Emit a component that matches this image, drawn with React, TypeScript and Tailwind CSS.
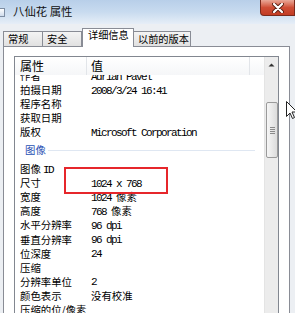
import React from "react";

type Row = { label: string; labelMono?: string; value?: string; valueCjk?: string };

const topRows: Row[] = [
  { label: "作者", value: "Adrian Pavel" },
  { label: "拍摄日期", value: "2008/3/24 16:41" },
  { label: "程序名称" },
  { label: "获取日期" },
  { label: "版权", value: "Microsoft Corporation" },
];

const imageRows: Row[] = [
  { label: "图像 ", labelMono: "ID" },
  { label: "尺寸", value: "1024 x 768" },
  { label: "宽度", value: "1024 ", valueCjk: "像素" },
  { label: "高度", value: "768 ", valueCjk: "像素" },
  { label: "水平分辨率", value: "96 dpi" },
  { label: "垂直分辨率", value: "96 dpi" },
  { label: "位深度", value: "24" },
  { label: "压缩" },
  { label: "分辨率单位", value: "2" },
  { label: "颜色表示", valueCjk: "没有校准" },
  { label: "压缩的位/像素" },
];

function PropRow({ row }: { row: Row }) {
  return (
    <div className="flex h-[14.1px] items-center text-[10.4px] leading-[14px]">
      <div className="w-[72px] shrink-0 whitespace-nowrap pl-[5px]">
        {row.label}
        {row.labelMono && (
          <span className="font-['Liberation_Mono',monospace] text-[11px] tracking-[-1.6px]">{row.labelMono}</span>
        )}
      </div>
      <div className="whitespace-nowrap pl-[4px]">
        {row.value && (
          <span className="font-['Liberation_Mono',monospace] text-[11px] tracking-[-1.6px]">{row.value}</span>
        )}
        {row.valueCjk && <span>{row.valueCjk}</span>}
      </div>
    </div>
  );
}

function Tab({ label, width, active }: { label: string; width: string; active?: boolean }) {
  if (active) {
    return (
      <div
        className={`relative z-10 -mb-px h-[19px] ${width} shrink-0 whitespace-nowrap border border-b-0 border-[#898c95] bg-white pl-[5px] text-[10.2px] leading-[12px]`}
      >
        {label}
      </div>
    );
  }
  return (
    <div
      className={`flex h-[15px] ${width} shrink-0 items-center whitespace-nowrap border border-b-0 border-l-0 border-[#898c95] bg-gradient-to-b from-[#f4f4f4] to-[#e1e1e1] pl-[4px] text-[10.2px] leading-[14px] first:border-l`}
    >
      {label}
    </div>
  );
}

export default function App() {
  return (
    <div className="relative h-[313px] w-[295px] overflow-hidden bg-[#eceff3] font-['Noto_Sans_CJK_SC',sans-serif] text-black">
      {/* title bar */}
      <div className="flex h-[24px] items-start bg-gradient-to-b from-[#b8cfe9] via-[#c8dbef] to-[#e6eef7]">
        <div className="-ml-[3px] mt-[8px] h-[9px] w-[8px] border border-[#7d8da3] bg-gradient-to-b from-white to-[#cfdcec]" />
        <span className="ml-[8px] mt-[3px] text-[11.4px] leading-[16px] text-[#111]">八仙花 属性</span>
        <div className="ml-auto flex h-[16px] w-[35px] items-center justify-center rounded-bl-[4px] border border-t-0 border-[#7a2a1c] bg-gradient-to-b from-[#e9a898] via-[#cf4e36] to-[#c23c24]">
          <svg width="12" height="10" viewBox="0 0 12 10">
            <path d="M2 1 L10 9 M10 1 L2 9" stroke="#5a1e12" strokeWidth="4" strokeLinecap="round" />
            <path d="M2 1 L10 9 M10 1 L2 9" stroke="#ffffff" strokeWidth="2.2" strokeLinecap="round" />
          </svg>
        </div>
      </div>

      {/* tabs */}
      <div className="flex h-[22px] items-end pl-[3px]">
        <Tab label="常规" width="w-[40px]" />
        <Tab label="安全" width="w-[39px]" />
        <Tab label="详细信息" width="w-[52px]" active />
        <Tab label="以前的版本" width="w-[57px]" />
      </div>

      {/* panel */}
      <div className="ml-[3px] h-[280px] w-[287px] border border-[#898c95] bg-white pl-[10px] pt-[9px]">
        <div className="flex h-[270px] w-[265px] border border-[#828790]">
          <div className="flex-1 overflow-hidden">
            {/* header */}
            <div className="flex h-[18px] bg-gradient-to-b from-white to-[#f5f6f8] text-[12px] leading-[18px]">
              <div className="w-[72px] border-r border-[#e2e5e9] pl-[5px]">属性</div>
              <div className="w-[163px] border-r border-[#e2e5e9] pl-[4px]">值</div>
              <div className="flex-1" />
            </div>
            {/* body */}
            <div className="h-[252px] overflow-hidden">
              <div className="-mt-[6px]">
                {topRows.map((r) => (
                  <PropRow key={r.label} row={r} />
                ))}
                <div className="h-[22.6px] pt-[4px]">
                  <div className="flex h-[14px] items-center">
                    <span className="pl-[10px] text-[10.4px] leading-[14px] text-[#2a52b4]">图像</span>
                    <div className="ml-[2px] mr-[9px] h-px flex-1 bg-[#dfe7f2]" />
                  </div>
                </div>
                {imageRows.map((r) => (
                  <PropRow key={r.label} row={r} />
                ))}
              </div>
            </div>
          </div>

          {/* scrollbar */}
          <div className="w-[14px] border-l border-[#e4e4e4] bg-[#ececec]">
            <div className="flex h-[16px] items-center justify-center">
              <svg width="7" height="4" viewBox="0 0 7 4">
                <path d="M0.5 3.5 L3.5 0.5 L6.5 3.5 Z" fill="#333" />
              </svg>
            </div>
            <div className="ml-px mt-[29px] flex h-[56px] w-[12px] flex-col items-center justify-center gap-[1px] rounded-[2px] border border-[#9a9a9a] bg-gradient-to-r from-[#f6f6f6] to-[#dcdcdc]">
              <div className="h-px w-[5px] bg-[#8a8a8a]" />
              <div className="h-px w-[5px] bg-[#8a8a8a]" />
              <div className="h-px w-[5px] bg-[#8a8a8a]" />
              <div className="h-px w-[5px] bg-[#8a8a8a]" />
            </div>
          </div>
        </div>
      </div>

      {/* red annotation box */}
      <div className="absolute left-[64px] top-[167px] h-[27px] w-[104px] border-2 border-[#e6262b]" />

      {/* mouse cursor */}
      <svg className="absolute left-[286px] top-[101px]" width="12" height="19" viewBox="0 0 12 19">
        <path d="M0.5 0.5 L0.5 15.5 L4 12 L6.5 17.5 L8.5 16.5 L6 11 L11 11 Z" fill="#fff" stroke="#222" strokeWidth="1" />
      </svg>
    </div>
  );
}
